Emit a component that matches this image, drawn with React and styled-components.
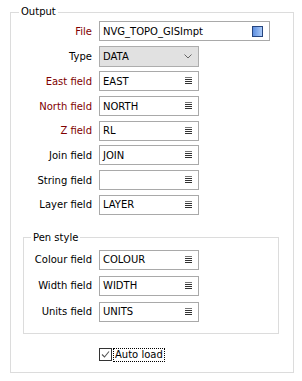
import React from "react";
import styled, { createGlobalStyle } from "styled-components";

const GlobalStyle = createGlobalStyle`
  body {
    margin: 0;
    background: #ffffff;
    font-family: "DejaVu Sans", "Liberation Sans", sans-serif;
    font-size: 10px;
    color: #000;
  }
`;

const Page = styled.div`
  padding: 6px 8px 0 10px;
  width: 302px;
  box-sizing: border-box;
`;

const GroupBox = styled.fieldset`
  box-sizing: border-box;
  border: 1px solid #dcdcdc;
  margin: ${p => p.$margin || "0"};
  padding: ${p => p.$padding || "0"};
  min-width: 0;
`;

const Legend = styled.legend`
  padding: 0 2px;
  margin-left: ${p => p.$indent}px;
  line-height: 12px;
  font-size: 10px;
`;

const FieldGrid = styled.div`
  display: grid;
  grid-template-columns: ${p => p.$labelWidth}px max-content;
  column-gap: 7px;
  row-gap: ${p => p.$rowGap}px;
  padding-top: ${p => p.$top}px;
  align-items: center;
`;

const Label = styled.label`
  text-align: right;
  white-space: nowrap;
  color: ${p => (p.$required ? "#800000" : "#000")};
`;

const Field = styled.div`
  box-sizing: border-box;
  display: flex;
  align-items: center;
  width: ${p => p.$width || 100}px;
  height: ${p => p.$height || 20}px;
  border: 1px solid ${p => (p.$select ? "#adadad" : "#a9a9a9")};
  background: ${p => (p.$select ? "#e1e1e1" : "#ffffff")};
  padding: 0 6px 0 3px;
`;

const FieldText = styled.span`
  flex: 1;
  white-space: nowrap;
  line-height: 15px;
`;

const ColourSwatch = styled.span`
  width: 9px;
  height: 9px;
  border: 1px solid #26457f;
  background: linear-gradient(90deg, #5e8fe0, #a9c9f7);
`;

const CheckRow = styled.div`
  display: flex;
  align-items: center;
  gap: 2px;
  margin-top: 14px;
  padding-left: 88px;
  height: 14px;
`;

const CheckBox = styled.span`
  box-sizing: border-box;
  width: 13px;
  height: 13px;
  border: 1px solid #333;
  background: #fff;
  display: flex;
  align-items: center;
  justify-content: center;
`;

const FocusText = styled.span`
  outline: 1px dotted #000;
  padding: 0 1px;
  line-height: 12px;
`;

const ListIcon = () => (
  <svg width="7" height="8" viewBox="0 0 7 8">
    <rect x="0" y="0" width="7" height="1" fill="#777" />
    <rect x="0" y="2" width="7" height="1" fill="#333" />
    <rect x="0" y="4" width="7" height="1" fill="#333" />
    <rect x="0" y="6" width="7" height="1" fill="#333" />
  </svg>
);

const Chevron = () => (
  <svg width="8" height="5" viewBox="0 0 8 5">
    <polyline points="0.5,0.5 4,4 7.5,0.5" fill="none" stroke="#666" strokeWidth="1" />
  </svg>
);

const Tick = () => (
  <svg width="11" height="11" viewBox="0 0 11 11">
    <polyline points="2,5.5 4.5,8 9,2.5" fill="none" stroke="#555" strokeWidth="1.1" />
  </svg>
);

const ListField = ({ value }) => (
  <Field>
    <FieldText>{value}</FieldText>
    <ListIcon />
  </Field>
);

const outputFields = [
  { label: "East field", value: "EAST", required: true },
  { label: "North field", value: "NORTH", required: true },
  { label: "Z field", value: "RL", required: true },
  { label: "Join field", value: "JOIN" },
  { label: "String field", value: "" },
  { label: "Layer field", value: "LAYER" },
];

const penFields = [
  { label: "Colour field", value: "COLOUR" },
  { label: "Width field", value: "WIDTH" },
  { label: "Units field", value: "UNITS" },
];

export default function App() {
  return (
    <Page>
      <GlobalStyle />
      <GroupBox $padding="0 0 10px 0">
        <Legend $indent={8}>Output</Legend>
        <FieldGrid $labelWidth={81} $rowGap={4.7} $top={3}>
          <Label $required>File</Label>
          <Field $width={171}>
            <FieldText>NVG_TOPO_GISImpt</FieldText>
            <ColourSwatch />
          </Field>
          <Label>Type</Label>
          <Field $select $height={21}>
            <FieldText>DATA</FieldText>
            <Chevron />
          </Field>
          {outputFields.map(f => (
            <React.Fragment key={f.label}>
              <Label $required={f.required}>{f.label}</Label>
              <ListField value={f.value} />
            </React.Fragment>
          ))}
        </FieldGrid>

        <GroupBox $margin="17px 14px 0 12px" $padding="0 0 11px 0">
          <Legend $indent={7}>Pen style</Legend>
          <FieldGrid $labelWidth={68} $rowGap={6} $top={6}>
            {penFields.map(f => (
              <React.Fragment key={f.label}>
                <Label>{f.label}</Label>
                <ListField value={f.value} />
              </React.Fragment>
            ))}
          </FieldGrid>
        </GroupBox>

        <CheckRow>
          <CheckBox>
            <Tick />
          </CheckBox>
          <FocusText>Auto load</FocusText>
        </CheckRow>
      </GroupBox>
    </Page>
  );
}
